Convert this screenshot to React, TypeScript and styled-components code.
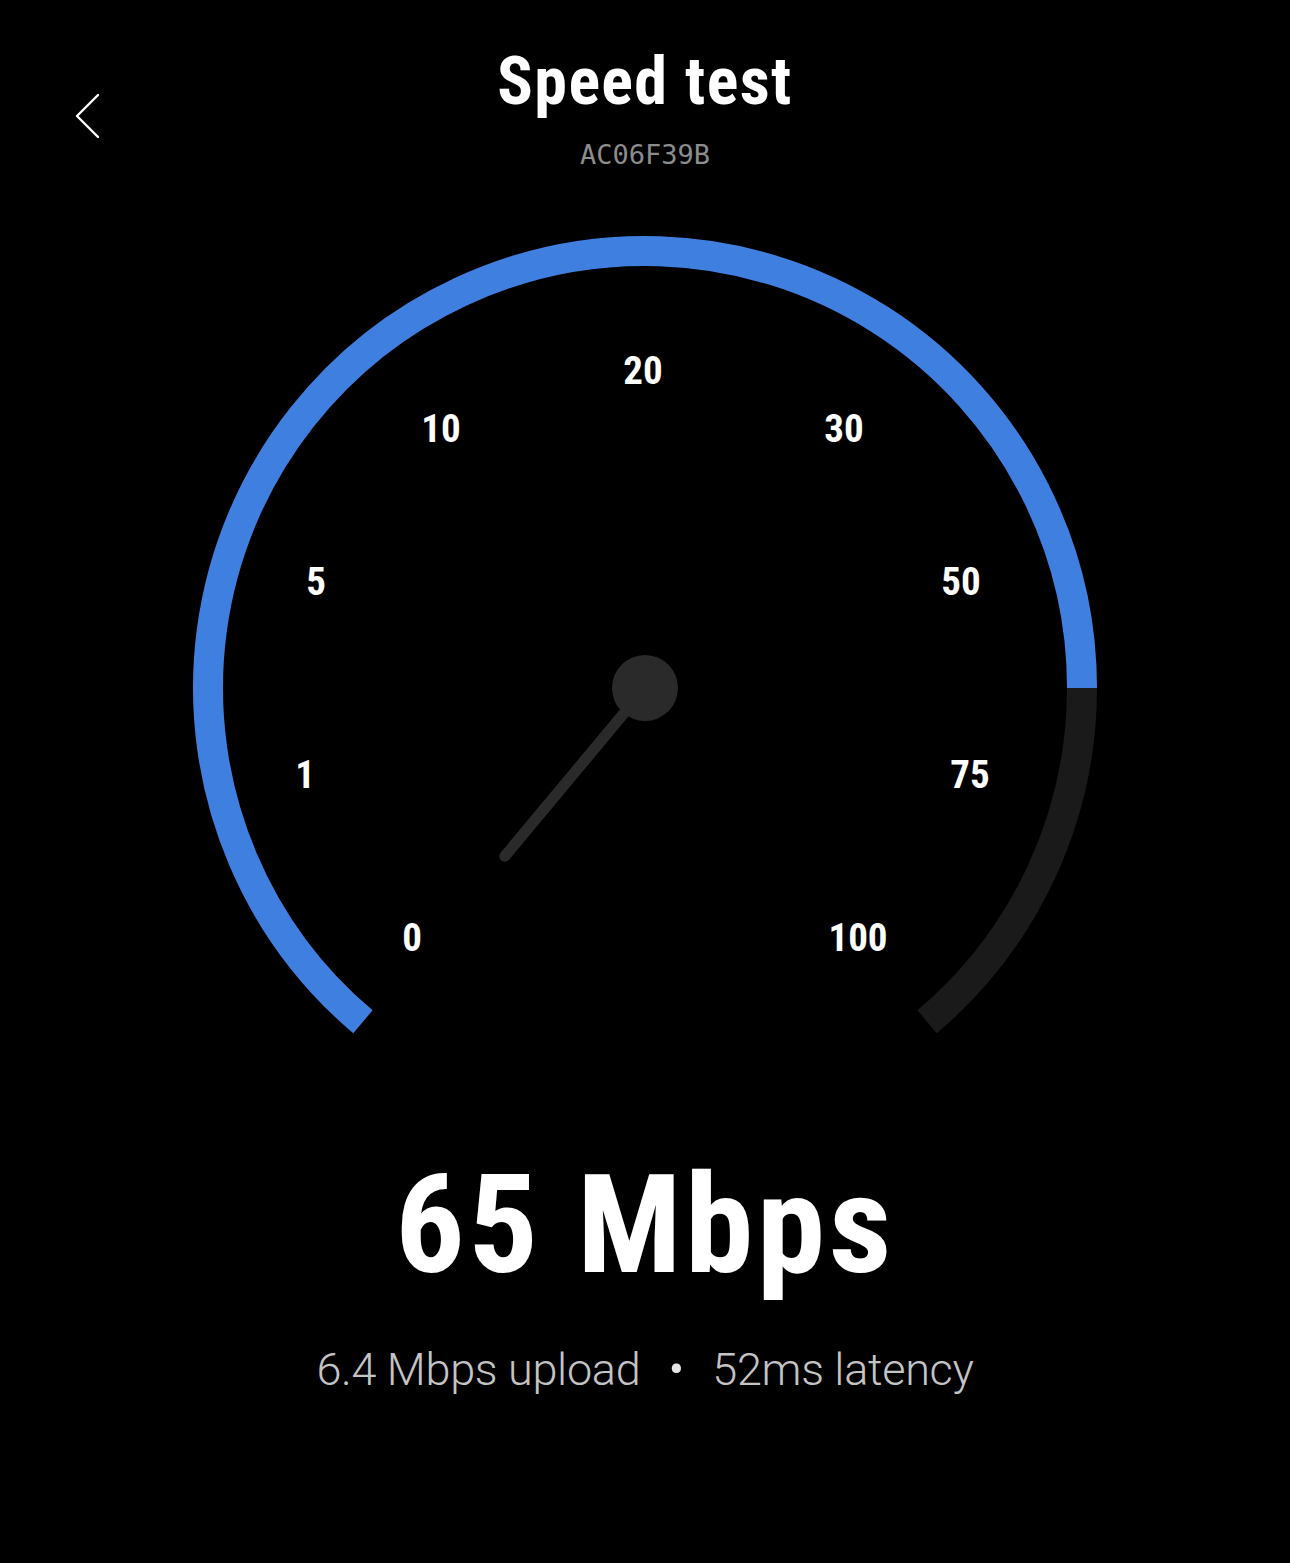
import React from 'react';
import styled, { createGlobalStyle } from 'styled-components';

const GlobalStyle = createGlobalStyle`
  html, body {
    margin: 0;
    padding: 0;
    background: #000;
  }
  body {
    font-family: 'Roboto', 'Liberation Sans', sans-serif;
    color: #fff;
  }
`;

const CONDENSED = `'Roboto Condensed', 'Liberation Sans Narrow', 'DejaVu Sans Condensed', 'Roboto', sans-serif`;

// gauge geometry, in svg coordinates
const CX = 460;
const CY = 460;
const R = 437;
const START = 130.2;
const END = 409.8;
const FILL_END = 360;

const polar = (deg: number, r = R) => {
  const rad = (deg * Math.PI) / 180;
  return { x: CX + r * Math.cos(rad), y: CY + r * Math.sin(rad) };
};

const arcPath = (from: number, to: number) => {
  const a = polar(from);
  const b = polar(to);
  const large = to - from > 180 ? 1 : 0;
  return `M ${a.x} ${a.y} A ${R} ${R} 0 ${large} 1 ${b.x} ${b.y}`;
};

const ticks = [
  { label: '0', x: 227, y: 709 },
  { label: '1', x: 120, y: 546 },
  { label: '5', x: 131, y: 353 },
  { label: '10', x: 256, y: 200 },
  { label: '20', x: 458, y: 142 },
  { label: '30', x: 659, y: 200 },
  { label: '50', x: 776, y: 353 },
  { label: '75', x: 785, y: 546 },
  { label: '100', x: 673, y: 709 },
];

const Gauge: React.FC<{ needleAngle: number }> = ({ needleAngle }) => {
  const tip = polar(needleAngle, 219);
  return (
    <GaugeSvg width="920" height="810" viewBox="0 0 920 810">
      <path d={arcPath(START, FILL_END)} fill="none" stroke="#3f7fdf" strokeWidth="30" />
      <path d={arcPath(FILL_END, END)} fill="none" stroke="#1a1a1a" strokeWidth="30" />
      {ticks.map((t) => (
        <TickLabel key={t.label} x={t.x} y={t.y + 14} textAnchor="middle">
          {t.label}
        </TickLabel>
      ))}
      <line x1={CX} y1={CY} x2={tip.x} y2={tip.y} stroke="#2a2a2a" strokeWidth="11" strokeLinecap="round" />
      <circle cx={CX} cy={CY} r="33" fill="#2a2a2a" />
    </GaugeSvg>
  );
};

export default function App() {
  return (
    <Page>
      <GlobalStyle />
      <Header>
        <BackButton aria-label="Back">
          <svg width="26" height="46" viewBox="0 0 26 46">
            <polyline points="23,2 2,23 23,44" fill="none" stroke="#fff" strokeWidth="2.4" strokeLinecap="round" strokeLinejoin="round" />
          </svg>
        </BackButton>
        <TitleBlock>
          <Title>Speed test</Title>
          <DeviceId>AC06F39B</DeviceId>
        </TitleBlock>
        <span />
      </Header>

      <Gauge needleAngle={129.8} />

      <Speed>65 Mbps</Speed>
      <Stats>
        <span>6.4 Mbps upload</span>
        <Dot>•</Dot>
        <span>52ms latency</span>
      </Stats>
    </Page>
  );
}

const Page = styled.div`
  width: 1290px;
  min-height: 1563px;
  background: #000;
  display: flex;
  flex-direction: column;
  align-items: center;
`;

const Header = styled.header`
  width: 100%;
  display: grid;
  grid-template-columns: 1fr auto 1fr;
  align-items: start;
  padding-top: 42px;
  box-sizing: border-box;
`;

const BackButton = styled.button`
  justify-self: start;
  margin: 51px 0 0 75px;
  padding: 0;
  background: none;
  border: none;
  cursor: pointer;
  display: flex;
`;

const TitleBlock = styled.div`
  display: flex;
  flex-direction: column;
  align-items: center;
`;

const Title = styled.h1`
  margin: 0;
  font-family: ${CONDENSED};
  font-size: 66px;
  font-weight: 700;
  letter-spacing: 1.4px;
  line-height: 80px;
  color: #fff;
`;

const DeviceId = styled.div`
  margin-top: 18px;
  font-family: 'DejaVu Sans Mono', 'Liberation Mono', monospace;
  font-size: 27px;
  line-height: 30px;
  color: #8c8c8c;
`;

const GaugeSvg = styled.svg`
  display: block;
  margin-top: 58px;
`;

const TickLabel = styled.text`
  font-family: ${CONDENSED};
  font-size: 39px;
  font-weight: 700;
  fill: #fff;
`;

const Speed = styled.div`
  margin-top: 112px;
  font-family: ${CONDENSED};
  font-size: 138px;
  font-weight: 700;
  letter-spacing: 3.5px;
  line-height: 150px;
  color: #fff;
`;

const Stats = styled.div`
  margin-top: 40px;
  display: flex;
  align-items: center;
  gap: 28px;
  font-family: 'Roboto', 'Liberation Sans', sans-serif;
  font-size: 45px;
  font-weight: 300;
  letter-spacing: -0.3px;
  color: #c4c4c4;
`;

const Dot = styled.span`
  font-size: 50px;
  color: #e6e6e6;
`;
